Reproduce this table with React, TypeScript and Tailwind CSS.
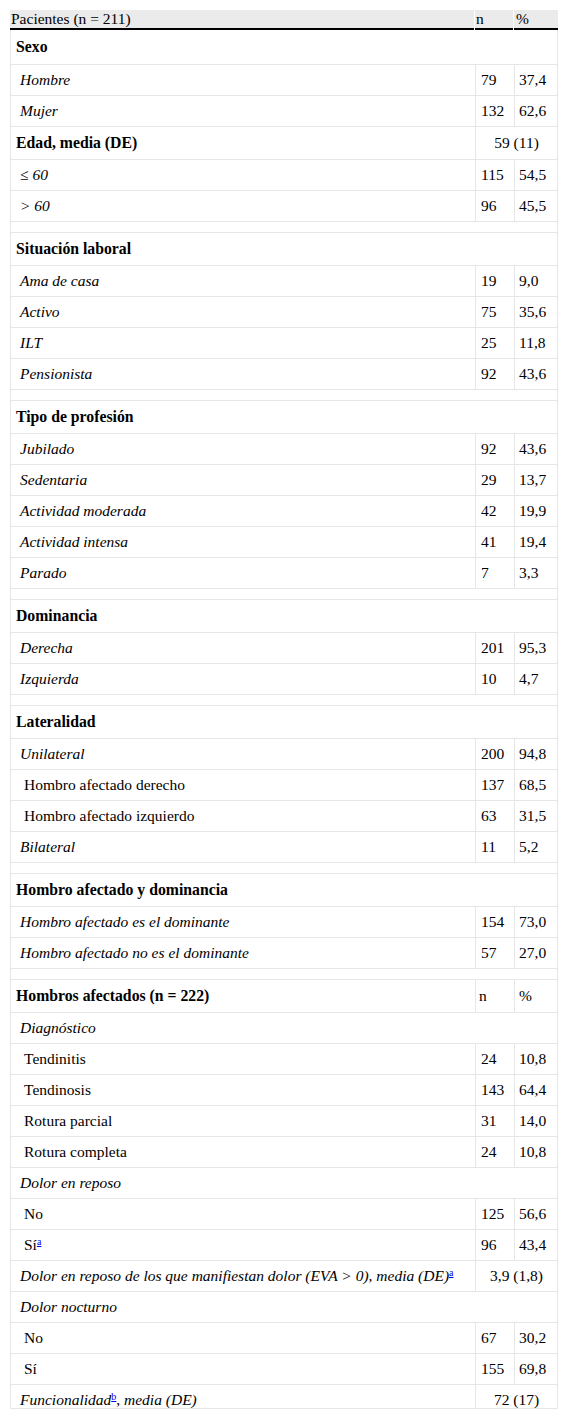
import type { ReactNode } from "react";

type Row =
  | { k: "sec"; t: string; h?: string }
  | { k: "item"; t: ReactNode; n: string; p: string; it?: boolean; ind?: number }
  | { k: "span"; t: ReactNode; v: string; bold?: boolean; it?: boolean; last?: boolean }
  | { k: "sub"; t: string }
  | { k: "gap" }
  | { k: "head2"; t: string };

const Ref = ({ c }: { c: string }) => (
  <sup className="text-[10px] text-[#0000ee] underline not-italic">{c}</sup>
);

const rows: Row[] = [
  { k: "sec", t: "Sexo", h: "h-[35px]" },
  { k: "item", t: "Hombre", n: "79", p: "37,4", it: true },
  { k: "item", t: "Mujer", n: "132", p: "62,6", it: true },
  { k: "span", t: "Edad, media (DE)", v: "59 (11)", bold: true },
  { k: "item", t: "≤ 60", n: "115", p: "54,5", it: true },
  { k: "item", t: "> 60", n: "96", p: "45,5", it: true },
  { k: "gap" },
  { k: "sec", t: "Situación laboral" },
  { k: "item", t: "Ama de casa", n: "19", p: "9,0", it: true },
  { k: "item", t: "Activo", n: "75", p: "35,6", it: true },
  { k: "item", t: "ILT", n: "25", p: "11,8", it: true },
  { k: "item", t: "Pensionista", n: "92", p: "43,6", it: true },
  { k: "gap" },
  { k: "sec", t: "Tipo de profesión" },
  { k: "item", t: "Jubilado", n: "92", p: "43,6", it: true },
  { k: "item", t: "Sedentaria", n: "29", p: "13,7", it: true },
  { k: "item", t: "Actividad moderada", n: "42", p: "19,9", it: true },
  { k: "item", t: "Actividad intensa", n: "41", p: "19,4", it: true },
  { k: "item", t: "Parado", n: "7", p: "3,3", it: true },
  { k: "gap" },
  { k: "sec", t: "Dominancia" },
  { k: "item", t: "Derecha", n: "201", p: "95,3", it: true },
  { k: "item", t: "Izquierda", n: "10", p: "4,7", it: true },
  { k: "gap" },
  { k: "sec", t: "Lateralidad" },
  { k: "item", t: "Unilateral", n: "200", p: "94,8", it: true },
  { k: "item", t: "Hombro afectado derecho", n: "137", p: "68,5", ind: 2 },
  { k: "item", t: "Hombro afectado izquierdo", n: "63", p: "31,5", ind: 2 },
  { k: "item", t: "Bilateral", n: "11", p: "5,2", it: true },
  { k: "gap" },
  { k: "sec", t: "Hombro afectado y dominancia" },
  { k: "item", t: "Hombro afectado es el dominante", n: "154", p: "73,0", it: true },
  { k: "item", t: "Hombro afectado no es el dominante", n: "57", p: "27,0", it: true },
  { k: "gap" },
  { k: "head2", t: "Hombros afectados (n = 222)" },
  { k: "sub", t: "Diagnóstico" },
  { k: "item", t: "Tendinitis", n: "24", p: "10,8", ind: 2 },
  { k: "item", t: "Tendinosis", n: "143", p: "64,4", ind: 2 },
  { k: "item", t: "Rotura parcial", n: "31", p: "14,0", ind: 2 },
  { k: "item", t: "Rotura completa", n: "24", p: "10,8", ind: 2 },
  { k: "sub", t: "Dolor en reposo" },
  { k: "item", t: "No", n: "125", p: "56,6", ind: 2 },
  { k: "item", t: <>Sí<Ref c="a" /></>, n: "96", p: "43,4", ind: 2 },
  {
    k: "span",
    t: <>Dolor en reposo de los que manifiestan dolor (EVA &gt; 0), media (DE)<Ref c="a" /></>,
    v: "3,9 (1,8)",
    it: true,
  },
  { k: "sub", t: "Dolor nocturno" },
  { k: "item", t: "No", n: "67", p: "30,2", ind: 2 },
  { k: "item", t: "Sí", n: "155", p: "69,8", ind: 2 },
  { k: "span", t: <>Funcionalidad<Ref c="b" />, media (DE)</>, v: "72 (17)", it: true, last: true },
];

const line = "border-[#e6e6e6]";

function clsx(...a: (string | false | undefined)[]) {
  return a.filter(Boolean).join(" ");
}

function TableRow({ r }: { r: Row }) {
  if (r.k === "gap") return <div className={`h-[11px] border-b ${line}`} />;

  if (r.k === "sec")
    return (
      <div className={`flex ${r.h ?? "h-[33px]"} items-center border-b ${line} pl-[5px] text-[15.75px] font-bold`}>
        {r.t}
      </div>
    );

  if (r.k === "sub")
    return (
      <div className={`flex h-[31px] items-center border-b ${line} pl-[9px] italic`}>{r.t}</div>
    );

  if (r.k === "head2")
    return (
      <div className={`flex h-[33px] border-b ${line}`}>
        <div className={`flex w-[465px] items-center border-r ${line} pl-[5px] text-[15.75px] font-bold`}>{r.t}</div>
        <div className={`flex w-[39px] items-center border-r ${line} pl-[3px]`}>n</div>
        <div className="flex flex-1 items-center pl-[4px]">%</div>
      </div>
    );

  if (r.k === "span") {
    const h = r.last ? "h-[24px] overflow-hidden" : r.bold ? "h-[33px]" : "h-[31px]";
    return (
      <div className={`flex ${h} border-b ${line}`}>
        <div
          className={clsx(
            `flex h-full w-[465px] border-r ${line}`,
            r.last ? "items-start pt-[6px]" : "items-center",
            r.bold ? "pl-[5px] text-[15.75px] font-bold" : "pl-[9px]",
            r.it && "italic"
          )}
        >
          <span>{r.t}</span>
        </div>
        <div className={clsx("flex h-full flex-1 justify-center", r.last ? "items-start pt-[6px]" : "items-center")}>
          {r.v}
        </div>
      </div>
    );
  }

  return (
    <div className={`flex h-[31px] border-b ${line}`}>
      <div
        className={clsx(
          `flex w-[465px] items-center border-r ${line}`,
          r.ind === 2 ? "pl-[13px]" : "pl-[9px]",
          r.it && "italic"
        )}
      >
        <span>{r.t}</span>
      </div>
      <div className={`flex w-[39px] items-center border-r ${line} pl-[5px]`}>{r.n}</div>
      <div className="flex flex-1 items-center pl-[4px]">{r.p}</div>
    </div>
  );
}

export default function App() {
  return (
    <div className="min-h-[1419px] bg-white pl-[10px] pt-[10px] font-['Liberation_Serif','Times_New_Roman',serif] text-[15.5px] leading-[18px] text-black">
      <div className="w-[548px]">
        <div className="flex gap-px bg-white">
          <div className="flex h-[20px] w-[464px] items-center border-b-2 border-black bg-[#ebebeb] pl-[1px]">
            Pacientes (n = 211)
          </div>
          <div className="flex h-[20px] w-[38px] items-center border-b-2 border-black bg-[#ebebeb] pl-[1px]">n</div>
          <div className="flex h-[20px] flex-1 items-center border-b-2 border-black bg-[#ebebeb] pl-[2px]">%</div>
        </div>
        <div className={`border-x ${line}`}>
          {rows.map((r, i) => (
            <TableRow key={i} r={r} />
          ))}
        </div>
      </div>
    </div>
  );
}
